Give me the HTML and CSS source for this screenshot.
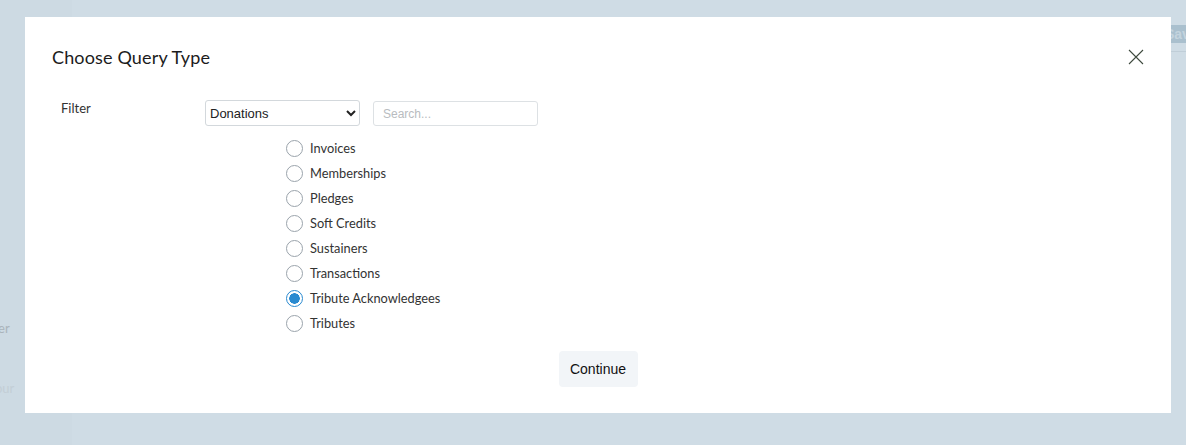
FILE: index.html
```html
<!DOCTYPE html>
<html lang="en">
<head>
    <meta charset="UTF-8">
    <title>Choose Query Type</title>
    <link rel="stylesheet" href="styles.css">
</head>
<body>
    <div class="page">
        <aside class="sidebar">
            <span class="side-text side-one">ler</span>
            <span class="side-text side-two">our</span>
        </aside>
        <main class="main">
            <div class="topbar">
                <button class="save-btn">Save</button>
            </div>
        </main>
    </div>

    <div class="modal">
        <div class="modal-header">
            <h2 class="modal-title">Choose Query Type</h2>
            <button class="close-btn" title="Close">
                <svg width="16" height="16" viewBox="0 0 16 16">
                    <path d="M1 1 L15 15 M15 1 L1 15" stroke="#3e4a3e" stroke-width="1.1" fill="none"/>
                </svg>
            </button>
        </div>
        <div class="modal-body">
            <div class="filter-row">
                <label class="filter-label">Filter</label>
                <div class="filter-controls">
                    <select class="type-select">
                        <option>Donations</option>
                    </select>
                    <input class="search-input" type="text" placeholder="Search...">
                </div>
            </div>
            <ul class="type-list">
                <li><label><input type="radio" name="qtype"><span>Invoices</span></label></li>
                <li><label><input type="radio" name="qtype"><span>Memberships</span></label></li>
                <li><label><input type="radio" name="qtype"><span>Pledges</span></label></li>
                <li><label><input type="radio" name="qtype"><span>Soft Credits</span></label></li>
                <li><label><input type="radio" name="qtype"><span>Sustainers</span></label></li>
                <li><label><input type="radio" name="qtype"><span>Transactions</span></label></li>
                <li><label><input type="radio" name="qtype" checked><span>Tribute Acknowledgees</span></label></li>
                <li><label><input type="radio" name="qtype"><span>Tributes</span></label></li>
            </ul>
            <div class="modal-footer">
                <button class="continue-btn">Continue</button>
            </div>
        </div>
    </div>
</body>
</html>
```

FILE: styles.css
```css
* {
    box-sizing: border-box;
}

body {
    margin: 0;
    padding: 0;
    width: 1186px;
    height: 445px;
    overflow: hidden;
    font-family: Lato, 'Noto Sans', sans-serif;
    background: #cfdce5;
}

.page {
    display: flex;
    height: 100%;
}

.sidebar {
    width: 72px;
    background: #cddae3;
    display: flex;
    flex-direction: column;
    padding-top: 320px;
    gap: 44px;
}

.side-text {
    font-size: 13px;
    color: #aab4bb;
    margin-left: -5px;
}

.side-two {
    color: #c3ced6;
}

.main {
    flex: 1;
}

.topbar {
    display: flex;
    justify-content: flex-end;
    padding-top: 25px;
    height: 52px;
    border-bottom: 1px solid #c0ced8;
}

.save-btn {
    background: #aac0ce;
    color: #c4d4de;
    border: none;
    height: 18px;
    width: 52px;
    margin-right: -25px;
    font-family: 'Liberation Sans', Arial, sans-serif;
    font-size: 14px;
    font-weight: bold;
    text-align: left;
    padding: 0 0 0 6px;
    line-height: 18px;
}

/* Modal sits over the page */
.modal {
    position: absolute;
    top: 17px;
    left: 25px;
    width: 1146px;
    height: 396px;
    background: #ffffff;
    padding: 0 27px;
}

.modal-header {
    display: flex;
    justify-content: space-between;
    align-items: flex-start;
    padding-top: 29px;
    height: 83px;
}

.modal-title {
    margin: 0;
    font-size: 18px;
    font-weight: 400;
    color: #1c1c1c;
    letter-spacing: 0.15px;
}

.close-btn {
    background: none;
    border: none;
    padding: 0;
    margin-top: 3px;
    cursor: pointer;
    line-height: 0;
}

.modal-body {
    display: flex;
    flex-direction: column;
}

.filter-row {
    display: flex;
    padding-left: 9px;
}

.filter-label {
    width: 144px;
    font-size: 13px;
    color: #333;
}

.filter-controls {
    display: flex;
    gap: 13px;
}

.type-select {
    width: 155px;
    height: 26px;
    border: 1px solid #d3d8dc;
    border-radius: 3px;
    font-family: 'Liberation Sans', Arial, sans-serif;
    font-size: 13px;
    color: #222;
    background: #fff;
    padding: 0;
}

.search-input {
    width: 165px;
    height: 25px;
    margin-top: 1px;
    border: 1px solid #dde1e4;
    border-radius: 3px;
    font-family: 'Liberation Sans', Arial, sans-serif;
    font-size: 12px;
    padding: 0 9px;
}

.search-input::placeholder {
    color: #b8bcc0;
}

.type-list {
    list-style: none;
    margin: 13px 0 0 0;
    padding: 0 0 0 234px;
}

.type-list li {
    height: 25px;
}

.type-list label {
    display: flex;
    align-items: center;
    gap: 7px;
    font-size: 12.8px;
    color: #333;
    height: 18px;
}

.type-list input {
    appearance: none;
    -webkit-appearance: none;
    margin: 0;
    width: 17px;
    height: 17px;
    border: 1px solid #9aa3ab;
    border-radius: 50%;
    background: #fff;
}

.type-list input:checked {
    border-color: #2a8ad0;
    background: radial-gradient(circle, #2a8ad0 0 5px, #fff 5.5px);
}

.modal-footer {
    display: flex;
    justify-content: center;
    padding-top: 12px;
}

.continue-btn {
    width: 79px;
    height: 36px;
    background: #f2f5f8;
    border: none;
    border-radius: 4px;
    font-family: 'Liberation Sans', Arial, sans-serif;
    font-size: 14px;
    color: #111;
    cursor: pointer;
}
```
